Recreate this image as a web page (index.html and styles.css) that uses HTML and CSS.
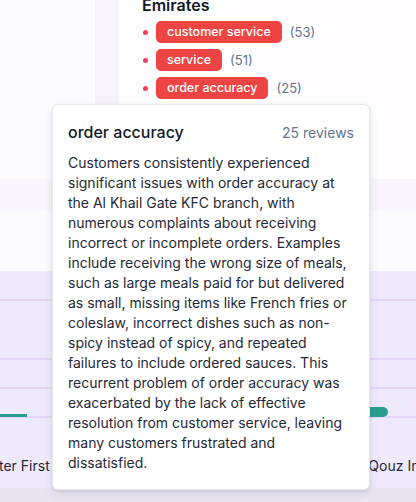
FILE: index.html
```html
<!DOCTYPE html>
<html>
<head>
<meta charset="utf-8">
<link rel="stylesheet" href="styles.css">
</head>
<body>
<div class="page">
  <div class="top">
    <div class="left-panel"></div>
    <div class="gutter"></div>
    <div class="right-card">
      <h3 class="region">Emirates</h3>
      <ul class="topics">
        <li class="topic"><span class="dot"></span><span class="tag">customer service</span><span class="count">(53)</span></li>
        <li class="topic"><span class="dot"></span><span class="tag">service</span><span class="count">(51)</span></li>
        <li class="topic"><span class="dot"></span><span class="tag">order accuracy</span><span class="count">(25)</span></li>
      </ul>
    </div>
  </div>
  <div class="strip"></div>
  <div class="band"></div>
  <div class="chart">
    <div class="grid">
      <div class="row r1"></div>
      <div class="row r2"></div>
      <div class="row r3"></div>
      <div class="row r4">
        <div class="bar-left"></div>
        <div class="bar-right"></div>
      </div>
    </div>
    <div class="labels">
      <span class="label label-left">ter First -</span>
      <span class="label label-right">Qouz Ind</span>
    </div>
  </div>
  <div class="footer"></div>

  <div class="tooltip">
    <div class="tip-head">
      <span class="tip-title">order accuracy</span>
      <span class="tip-count">25 reviews</span>
    </div>
    <p class="tip-body">Customers consistently experienced significant issues with order accuracy at the Al Khail Gate KFC branch, with numerous complaints about receiving incorrect or incomplete orders. Examples include receiving the wrong size of meals, such as large meals paid for but delivered as small, missing items like French fries or coleslaw, incorrect dishes such as non-spicy instead of spicy, and repeated failures to include ordered sauces. This recurrent problem of order accuracy was exacerbated by the lack of effective resolution from customer service, leaving many customers frustrated and dissatisfied.</p>
  </div>
</div>
</body>
</html>
```

FILE: styles.css
```css
* { box-sizing: border-box; }
html, body {
  margin: 0;
  padding: 0;
}
body {
  font-family: Inter, "Noto Sans", sans-serif;
  background: #f8f6fc;
  width: 416px;
  height: 502px;
  overflow: hidden;
}
.page {
  position: relative;
  width: 416px;
  height: 502px;
  display: flex;
  flex-direction: column;
}
.top {
  display: flex;
  height: 179px;
  flex: none;
}
.left-panel {
  width: 95px;
  background: #fcfbfe;
  box-shadow: 0 1px 2px rgba(60, 40, 100, 0.08);
}
.gutter {
  width: 23px;
  background: #f6f4fa;
}
.right-card {
  flex: 1;
  background: #fdfcff;
  padding-left: 24px;
  box-shadow: 0 1px 2px rgba(60, 40, 100, 0.08);
  overflow: hidden;
}
.region {
  margin: -7px 0 0 0;
  font-size: 16px;
  line-height: 24px;
  font-weight: 600;
  color: #111827;
}
.topics {
  list-style: none;
  margin: 4px 0 0 0;
  padding: 0;
  display: flex;
  flex-direction: column;
  gap: 6px;
}
.topic {
  display: flex;
  align-items: center;
  height: 22px;
}
.dot {
  width: 5px;
  height: 5px;
  border-radius: 50%;
  background: #f43f5e;
  margin-left: 1px;
  margin-right: 8px;
}
.tag {
  background: #ef4444;
  color: #ffffff;
  font-size: 12.5px;
  font-weight: 500;
  line-height: 22px;
  height: 22px;
  padding: 0 11px;
  border-radius: 5px;
}
.count {
  margin-left: 8px;
  font-size: 13px;
  color: #64748b;
}
.strip {
  height: 32px;
  flex: none;
  background: #f8f6fc;
}
.band {
  height: 60px;
  flex: none;
  background: #fcfbfe;
}
.chart {
  flex: 1;
  background: #efeafb;
  display: flex;
  flex-direction: column;
}
.grid {
  display: flex;
  flex-direction: column;
}
.row {
  border-bottom: 2px solid #e3d6f8;
  position: relative;
}
.r1 { height: 30px; }
.r2 { height: 59px; }
.r3 { height: 29px; }
.r4 { height: 29px; }
.bar-left {
  position: absolute;
  left: 0;
  bottom: -1px;
  width: 27px;
  height: 3px;
  background: #2a9d8f;
}
.bar-right {
  position: absolute;
  left: 368px;
  bottom: -1px;
  width: 20px;
  height: 10px;
  border-radius: 0 5px 5px 0;
  background: #2a9d8f;
}
.labels {
  display: flex;
  justify-content: space-between;
  padding-top: 38px;
  height: 70px;
}
.label {
  font-size: 14px;
  line-height: 20px;
  color: #1f2937;
  white-space: nowrap;
}
.label-left {
  margin-left: -1px;
}
.label-right {
  margin-right: -12px;
}
.footer {
  height: 17px;
  flex: none;
  background: #e9e6f1;
}
.tooltip {
  position: absolute;
  left: 52px;
  top: 104px;
  width: 318px;
  background: #ffffff;
  border: 1px solid #e5e7eb;
  border-radius: 6px;
  box-shadow: 0 4px 10px rgba(30, 20, 60, 0.10), 0 1px 3px rgba(30, 20, 60, 0.08);
  padding: 15px 15px 16px 15px;
}
.tip-head {
  display: flex;
  justify-content: space-between;
  align-items: baseline;
  line-height: 24px;
}
.tip-title {
  font-size: 16px;
  font-weight: 500;
  color: #111827;
}
.tip-count {
  font-size: 14px;
  color: #64748b;
}
.tip-body {
  margin: 8px 0 0 0;
  font-size: 14px;
  line-height: 20px;
  color: #1f2937;
}
```
